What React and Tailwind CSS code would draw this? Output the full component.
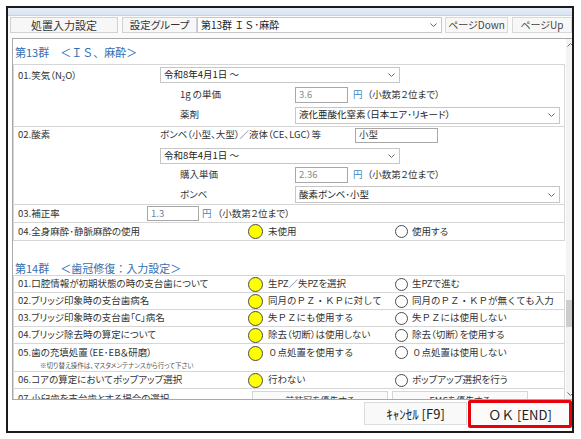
import React from 'react';

const Chevron = ({ up }) => (
  <svg width="7" height="4" viewBox="0 0 7 4">
    <path d={up ? 'M0.5 3.5 L3.5 0.5 L6.5 3.5' : 'M0.5 0.5 L3.5 3.5 L6.5 0.5'} stroke="#666" strokeWidth="1" fill="none" />
  </svg>
);

const Select = ({ className, children }) => (
  <div className={`flex items-center justify-between border border-[#c6c6c6] bg-white pl-[3px] pr-[4px] text-[#222] ${className}`}>
    <span className="whitespace-nowrap">{children}</span>
    <Chevron />
  </div>
);

const Input = ({ className, children }) => (
  <div className={`flex items-center border border-[#a8a8a8] bg-white pl-[3px] ${className}`}>{children}</div>
);

const Radio = ({ on }) => (
  <span className={`inline-block shrink-0 rounded-full border border-[#4a4a4a] ${on ? 'w-[15px] h-[15px] bg-[#ffff00]' : 'w-[13px] h-[13px] bg-white'}`} />
);

const Yen = ({ className }) => <span className={`text-[#3b8ac4] ${className}`}>円</span>;

// 全角英数字を含む文言は palt を外す
const NoPalt = ({ children, className = '' }) => (
  <span className={`[font-feature-settings:normal] ${className}`}>{children}</span>
);

const group14 = [
  ['01.口腔情報が初期状態の時の支台歯について', '生PZ／失PZを選択', '生PZで進む'],
  ['02.ブリッジ印象時の支台歯病名', <NoPalt>同月のＰＺ・ＫＰに対して</NoPalt>, <NoPalt>同月のＰＺ・ＫＰが無くても入力</NoPalt>],
  ['03.ブリッジ印象時の支台歯「C」病名', <NoPalt>失ＰＺにも使用する</NoPalt>, <NoPalt>失ＰＺには使用しない</NoPalt>],
  ['04.ブリッジ除去時の算定について', '除去（切断）は使用しない', '除去（切断）を使用する'],
];

const RadioRow = ({ label, a, b, className = 'h-[17px] items-center border-b' }) => (
  <div className={`flex border-[#d6d6d6] ${className}`}>
    <div className="w-[234px] pl-[4px] whitespace-nowrap">{label}</div>
    <div className="w-[147px] flex items-center gap-[5px]">
      <Radio on />
      <span className="whitespace-nowrap">{a}</span>
    </div>
    <div className="flex items-center gap-[4px]">
      <Radio />
      <span className="whitespace-nowrap">{b}</span>
    </div>
  </div>
);

export default function App() {
  return (
    <div className="w-[581px] h-[439px] bg-white overflow-hidden font-['Noto_Sans_CJK_JP','Noto_Sans',sans-serif] [font-feature-settings:'palt'] text-[9.5px] text-[#333] leading-none">
      <div className="ml-[6px] mt-[6px] w-[568px] h-[427px] border-2 border-[#1a1a1a] flex flex-col">
        {/* タイトルバー */}
        <div className="h-[8px] bg-gradient-to-b from-[#e4ecf6] to-[#d9e4f1] border-b border-[#c8d4e3]" />

        {/* ツールバー */}
        <div className="h-[22px] bg-[#fbfbfb] flex items-start pt-[1px] pl-[2px]">
          <button className="w-[108px] h-[16px] border border-[#d2d2d2] bg-[#f7f7f7] text-[11px] text-[#333]">処置入力設定</button>
          <div className="ml-[4px] w-[75px] h-[16px] border border-[#d2d2d2] bg-[#f7f7f7] flex items-center justify-center text-[10.5px]">設定グループ</div>
          <Select className="w-[245px] h-[16px] text-[10px]"><NoPalt>第13群 ＩＳ･麻酔</NoPalt></Select>
          <button className="ml-[3px] w-[63px] h-[16px] border border-[#d8d8d8] bg-[#f7f7f7] text-[10px] text-[#444]">ページDown</button>
          <button className="ml-[4px] flex-1 h-[16px] border border-[#d8d8d8] bg-[#f7f7f7] text-[10px] text-[#444]">ページUp</button>
        </div>

        {/* 内容 */}
        <div className="h-[362px] ml-[4px] border-t border-l border-b border-[#a9a9a9] flex overflow-hidden">
          <div className="flex-1 overflow-hidden">
            <div className="h-[25px] pl-[2px] pt-[8px] text-[11px] text-[#2f6fb3] [font-feature-settings:normal]">第13群　＜ＩＳ、麻酔＞</div>

            <div className="w-[552px] border border-[#d6d6d6]">
              {/* 01 */}
              <div className="flex h-[62px] border-b border-[#d6d6d6]">
                <div className="w-[146px] pl-[4px] pt-[6px]">01.笑気（N<sub className="text-[6px]">2</sub>O）</div>
                <div className="flex flex-col">
                  <Select className="w-[240px] h-[16px] mt-[2px]">令和8年4月1日 ～</Select>
                  <div className="flex items-center h-[20px] mt-[2px]">
                    <span className="w-[135px] pl-[20px]">1g の単価</span>
                    <Input className="w-[53px] h-[16px] text-[#8a8a8a]">3.6</Input>
                    <Yen className="ml-[5px]" />
                    <span className="ml-[5px]">（小数第２位まで）</span>
                  </div>
                  <div className="flex items-center h-[20px]">
                    <span className="w-[135px] pl-[20px]">薬剤</span>
                    <Select className="w-[265px] h-[17px]">液化亜酸化窒素（日本エア･リキード）</Select>
                  </div>
                </div>
              </div>

              {/* 02 */}
              <div className="flex h-[78px] border-b border-[#d6d6d6]">
                <div className="w-[146px] pl-[4px] pt-[3px]">02.酸素</div>
                <div className="flex flex-col">
                  <div className="flex items-center h-[16px]">
                    <span className="w-[195px] whitespace-nowrap">ボンベ（小型、大型）／液体（CE、LGC）等</span>
                    <Input className="w-[83px] h-[15px]">小型</Input>
                  </div>
                  <Select className="w-[240px] h-[16px] mt-[5px]">令和8年4月1日 ～</Select>
                  <div className="flex items-center h-[20px] mt-[1px]">
                    <span className="w-[135px] pl-[20px]">購入単価</span>
                    <Input className="w-[53px] h-[16px] text-[#8a8a8a]">2.36</Input>
                    <Yen className="ml-[5px]" />
                    <span className="ml-[5px]">（小数第２位まで）</span>
                  </div>
                  <div className="flex items-center h-[19px]">
                    <span className="w-[135px] pl-[20px]">ボンベ</span>
                    <Select className="w-[265px] h-[17px]">酸素ボンベ･小型</Select>
                  </div>
                </div>
              </div>

              {/* 03 */}
              <div className="flex items-center h-[18px] border-b border-[#d6d6d6]">
                <div className="w-[133px] pl-[4px]">03.補正率</div>
                <Input className="w-[52px] h-[15px] text-[#6f7fa3]">1.3</Input>
                <Yen className="ml-[3px]" />
                <span className="ml-[6px]">（小数第２位まで）</span>
              </div>

              {/* 04 */}
              <RadioRow label="04.全身麻酔･静脈麻酔の使用" a="未使用" b="使用する" className="h-[17px] items-center" />
            </div>

            <div className="h-[20px]" />
            <div className="h-[14px] pl-[2px] flex items-center text-[11px] text-[#2f6fb3] [font-feature-settings:normal]">第14群　＜歯冠修復：入力設定＞</div>

            <div className="w-[552px] border border-[#d6d6d6]">
              {group14.map(([l, a, b]) => (
                <RadioRow key={l} label={l} a={a} b={b} />
              ))}
              <div className="flex h-[28px] border-b border-[#d6d6d6] pt-[2px]">
                <div className="w-[234px] pl-[4px] flex flex-col">
                  <span className="h-[14px] flex items-center whitespace-nowrap">05.歯の充填処置（EE･EB＆研磨）</span>
                  <span className="pl-[22px] mt-[2px] text-[6.5px] text-[#555] whitespace-nowrap">※切り替え操作は、マスタメンテナンスから行って下さい</span>
                </div>
                <div className="w-[147px] flex items-start gap-[5px]">
                  <Radio on />
                  <NoPalt className="h-[14px] flex items-center">０点処置を使用する</NoPalt>
                </div>
                <div className="flex items-start gap-[4px]">
                  <Radio />
                  <NoPalt className="h-[13px] flex items-center">０点処置は使用しない</NoPalt>
                </div>
              </div>
              <RadioRow label="06.コアの算定においてポップアップ選択" a="行わない" b="ポップアップ選択を行う" />
              <div className="flex h-[24px] items-start">
                <div className="w-[238px] pl-[4px] pt-[5px] whitespace-nowrap">07.小臼歯を支台歯とする場合の選択</div>
                <div className="mt-[2px] w-[136px] h-[18px] border border-[#d6d6d6] bg-[#fafafa] flex items-center justify-center text-[9px]">前装冠を優先する</div>
                <div className="ml-[4px] mt-[2px] w-[136px] h-[18px] border border-[#d6d6d6] bg-[#fafafa] flex items-center justify-center text-[9px]">EMCを優先する</div>
              </div>
            </div>
          </div>

          {/* スクロールバー */}
          <div className="w-[6px] bg-[#f3f3f3] flex flex-col items-center">
            <div className="mt-[4px] ml-[3px]"><Chevron up /></div>
            <div className="mt-[253px] w-full h-[27px] bg-[#cdcdcd]" />
            <div className="mt-auto mb-[3px] ml-[3px]"><Chevron /></div>
          </div>
        </div>

        {/* ボタン */}
        <div className="flex-1 flex items-start justify-end">
          <button className="mt-[2px] w-[103px] h-[23px] border border-[#dcdcdc] bg-[#f9f9f9] text-[13px] text-[#222]">ｷｬﾝｾﾙ [F9]</button>
          <button className="ml-[1px] w-[104px] h-[28px] border-[3px] border-[#e8000b] rounded-[2px] bg-[#fbfbfb] text-[13px] text-[#222] [font-feature-settings:normal]">ＯＫ [END]</button>
        </div>
      </div>
    </div>
  );
}
